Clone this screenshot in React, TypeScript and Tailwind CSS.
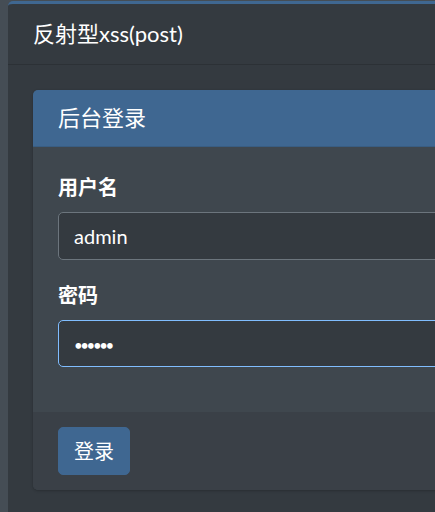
export default function App() {
  const font = { fontFamily: 'Lato, "Noto Sans CJK SC", sans-serif' };
  return (
    <div
      className="w-[435px] h-[512px] overflow-hidden bg-[#454d55] pl-[8px] pt-[1px] text-white"
      style={font}
    >
      <div className="w-[700px] h-[600px] bg-[#343a40] border-t-[3px] border-[#3f6791] rounded-tl-[5px]">
        <div className="px-[25px] py-[15px] border-b border-[#2c3136]">
          <h3 className="text-[22px] leading-[30px] font-normal">反射型xss(post)</h3>
        </div>
        <div className="p-[25px]">
          <div className="w-[600px] rounded-[5px] bg-[#3f474e] shadow-[0_0_1px_rgba(0,0,0,0.125),0_1px_3px_rgba(0,0,0,0.2)] overflow-hidden">
            <div className="bg-[#3f6791] px-[25px] py-[15px] border-b border-[#395d82]">
              <h3 className="text-[22px] leading-[26.4px] font-normal">后台登录</h3>
            </div>
            <div className="p-[25px]">
              <div className="mb-[20px]">
                <label className="block text-[20px] leading-[30px] font-bold mb-[10px]">用户名</label>
                <input
                  readOnly
                  value="admin"
                  className="block w-full h-[47.5px] px-[15px] py-[7.5px] text-[20px] leading-[30px] bg-[#343a40] border border-[#6c757d] rounded-[5px] text-white outline-none"
                />
              </div>
              <div className="mb-[20px]">
                <label className="block text-[20px] leading-[30px] font-bold mb-[10px]">密码</label>
                <input
                  readOnly
                  type="password"
                  value="123456"
                  className="block w-full h-[47.5px] px-[15px] pt-[9px] pb-[6px] text-[15px] tracking-[-2.4px] leading-[30px] bg-[#343a40] border border-[#80bdff] rounded-[5px] text-white outline-none"
                />
              </div>
            </div>
            <div className="bg-[#3a4047] px-[25px] py-[15px]">
              <button className="h-[47.5px] px-[15px] text-[20px] leading-[30px] bg-[#3f6791] border border-[#3f6791] rounded-[5px] text-white">
                登录
              </button>
            </div>
          </div>
        </div>
      </div>
    </div>
  );
}
